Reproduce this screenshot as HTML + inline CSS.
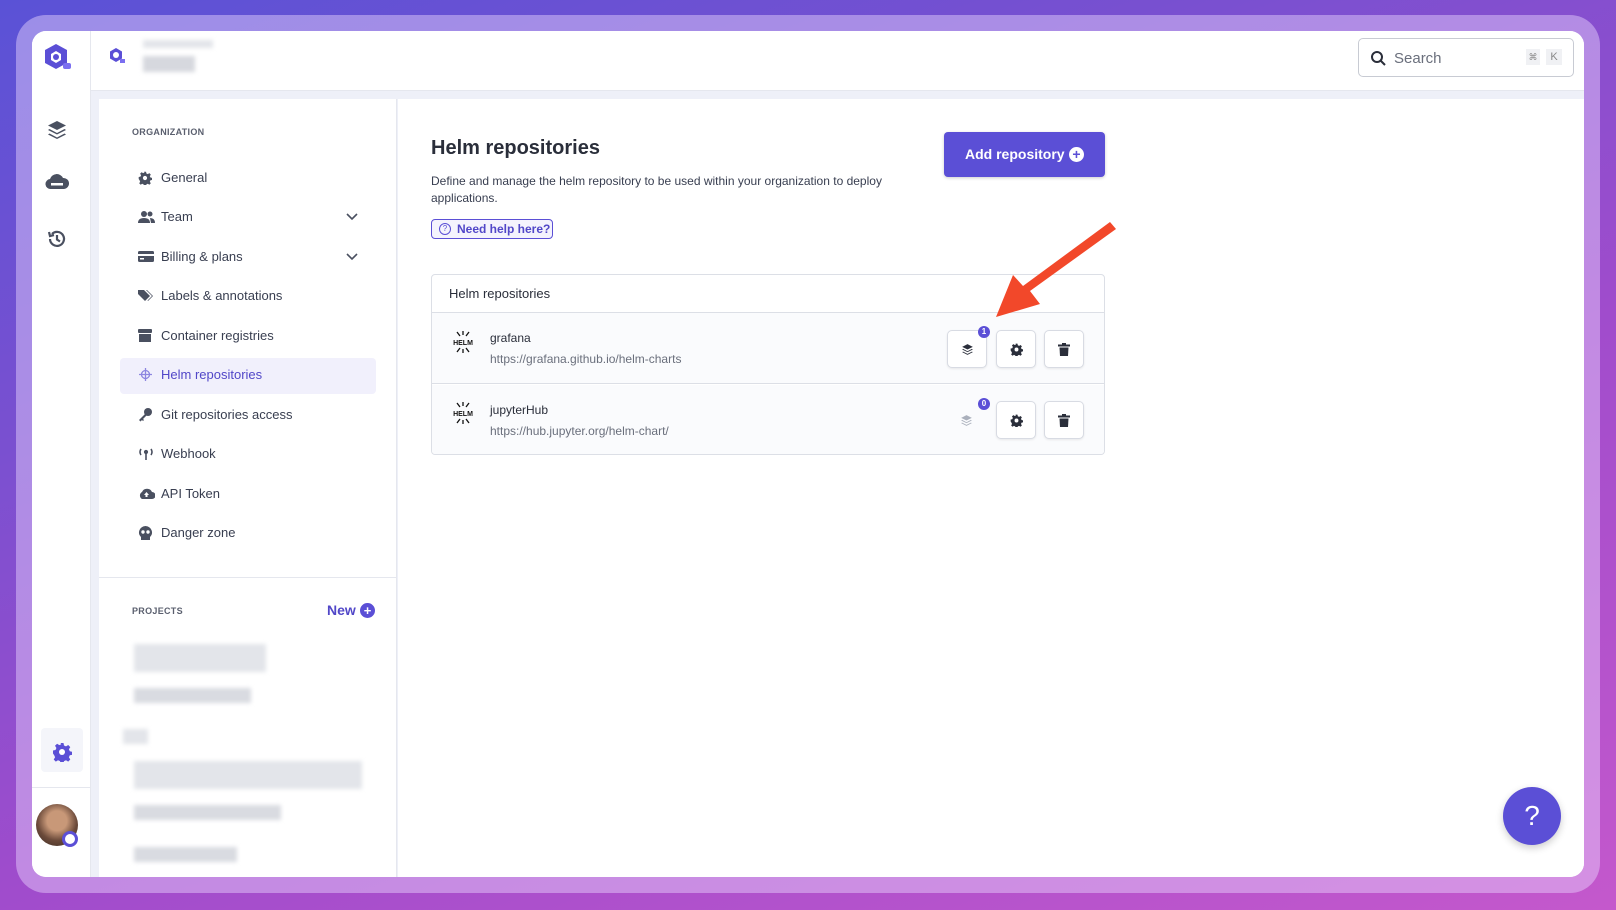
<!DOCTYPE html>
<html><head><meta charset="utf-8"><style>
*{box-sizing:border-box;margin:0;padding:0}
body{width:1616px;height:910px;overflow:hidden;font-family:"Liberation Sans",sans-serif;background:linear-gradient(160deg,#5a52d6 0%,#7a50d0 30%,#a04ccc 60%,#c458cc 100%);position:relative;color:#383e50}
.frame{position:absolute;left:16px;top:15px;width:1584px;height:878px;border-radius:30px;background:rgba(235,215,255,0.45)}
.win{position:absolute;left:32px;top:31px;width:1552px;height:846px;border-radius:14px;background:#fff;overflow:hidden}
.abs{position:absolute}
.rail{left:0;top:0;width:59px;height:846px;border-right:1px solid #e5e7ee;background:#fff}
.hdr{left:59px;top:0;right:0;height:60px;border-bottom:1px solid #e5e7ee;background:#fff}
.gray{left:59px;top:60px;right:0;bottom:0;background:#eef0f8}
.side{left:67px;top:68px;width:298px;bottom:0;background:#fff;border-right:1px solid #e5e7ee}
.main{left:366px;top:68px;right:0;bottom:0;background:#fff}
.item{position:absolute;left:0;font-size:13px;color:#383e50;white-space:nowrap;line-height:15px}
.item svg{position:absolute;left:-23px;top:1px}
.blur{position:absolute;background:#e3e5ea;filter:blur(2px)}
.btn{position:absolute;width:40px;height:38px;border:1px solid #d8dbe3;border-radius:5px;background:#fff;box-shadow:0 1px 2px rgba(0,0,0,.08)}
.btn svg{position:absolute;left:13px;top:12px}
.badge{position:absolute;width:12px;height:12px;border-radius:6px;background:#5b4fd6;color:#fff;font-size:8px;text-align:center;line-height:12px;font-weight:bold}
.helm{position:absolute;left:19px;width:22px;text-align:center;font-size:7px;font-weight:bold;color:#111;letter-spacing:-.3px}
</style></head><body>
<div class="frame"></div>
<div class="win">
 <div class="abs gray"></div>
 <div class="abs rail">
  <svg class="abs" style="left:9px;top:10px" width="34" height="34" viewBox="0 0 34 34"><path d="M15 3 L26 9 L26 22 L15 28 L4 22 L4 9Z" fill="#5b4fd6"/><path d="M15 10 L20 13 L20 19 L15 22 L10 19 L10 13Z" fill="#fff"/><circle cx="15" cy="16" r="3" fill="#5b4fd6"/><rect x="22" y="22" width="8" height="6" rx="2" fill="#7b6ff0"/></svg>
  <svg class="abs" style="left:14px;top:88px" width="22" height="22" viewBox="0 0 22 22" fill="#4a5060"><path d="M11 2 L20 6.5 L11 11 L2 6.5Z"/><path d="M3.5 10 L11 14 L18.5 10 L20 11 L11 15.5 L2 11Z"/><path d="M3.5 14.5 L11 18.5 L18.5 14.5 L20 15.5 L11 20 L2 15.5Z"/></svg>
  <svg class="abs" style="left:13px;top:141px" width="24" height="20" viewBox="0 0 24 20" fill="#4a5060"><path d="M6 17 A5 5 0 0 1 5 7 A7 7 0 0 1 18 6 A5.5 5.5 0 0 1 19 17Z"/><rect x="6" y="11" width="12" height="2.5" fill="#fff"/></svg>
  <svg class="abs" style="left:14px;top:197px" width="22" height="22" viewBox="0 0 22 22" fill="none" stroke="#4a5060" stroke-width="2.2"><path d="M4 11 A7 7 0 1 0 6 6"/><path d="M3 4 L4 8 L8 7"/><path d="M11 7 V11.5 L14 13.5"/></svg>
  <div class="abs" style="left:9px;top:697px;width:42px;height:44px;background:#f4f5fa;border-radius:4px"></div>
  <svg class="abs" style="left:20px;top:711px" width="20" height="20" viewBox="0 0 20 20"><path fill="#5b4fd6" d="M8.5 1h3l.5 2.5 2 .9 2.2-1.4 2.1 2.1-1.4 2.2.9 2 2.5.5v3l-2.5.5-.9 2 1.4 2.2-2.1 2.1-2.2-1.4-2 .9-.5 2.5h-3l-.5-2.5-2-.9-2.2 1.4-2.1-2.1 1.4-2.2-.9-2L1 11.5v-3l2.5-.5.9-2L3 3.8 5.1 1.7 7.3 3.1l2-.9z"/><circle cx="10" cy="10" r="3" fill="#fff"/></svg>
  <div class="abs" style="left:0;top:756px;width:59px;border-top:1px solid #e5e7ee"></div>
  <div class="abs" style="left:4px;top:773px;width:42px;height:42px;border-radius:21px;background:radial-gradient(circle at 50% 40%,#c89878 0 30%,#6b4a3a 60%,#3a2a22)"></div>
  <div class="abs" style="left:30px;top:800px;width:16px;height:16px;border-radius:8px;background:#fff;border:3px solid #5b4fd6"></div>
 </div>
 <div class="abs hdr">
  <svg class="abs" style="left:17px;top:16px" width="18" height="18" viewBox="0 0 18 18"><path d="M8 1 L14 4.5 L14 11.5 L8 15 L2 11.5 L2 4.5Z" fill="#5b4fd6"/><circle cx="8" cy="8" r="3" fill="#fff"/><rect x="12" y="12" width="5" height="4" fill="#7b6ff0"/></svg>
  <div class="blur" style="left:52px;top:9px;width:70px;height:8px"></div>
  <div class="blur" style="left:52px;top:25px;width:52px;height:16px;background:#d6d8de"></div>
  <div class="abs" style="left:1267px;top:7px;width:216px;height:39px;border:1px solid #c8cbd3;border-radius:5px;background:#fff">
   <svg class="abs" style="left:11px;top:11px" width="17" height="17" viewBox="0 0 17 17" fill="none" stroke="#2a2e3a" stroke-width="2"><circle cx="7" cy="7" r="5"/><path d="M11 11 L15 15"/></svg>
   <span class="abs" style="left:35px;top:11px;font-size:15px;color:#6a6f7c">Search</span>
   <span class="abs" style="left:167px;top:10px;width:14px;height:16px;background:#f0f1f4;font-size:9px;color:#888;text-align:center;line-height:16px">⌘</span>
   <span class="abs" style="left:187px;top:10px;width:16px;height:16px;background:#f0f1f4;font-size:11px;color:#888;text-align:center;line-height:16px">K</span>
  </div>
 </div>
 <div class="abs side">
  <div class="abs" style="left:33px;top:28px;font-size:9px;font-weight:bold;color:#5a5f6e;letter-spacing:.3px">ORGANIZATION</div>
  <div class="abs" style="left:21px;top:259px;width:256px;height:36px;background:#f1f0fc;border-radius:4px"></div>
  <div style="position:absolute;left:62px;top:0">
   <div class="item" style="top:71px"><svg width="14" height="14" viewBox="0 0 20 20"><path fill="#4a5060" d="M8.5 1h3l.5 2.5 2 .9 2.2-1.4 2.1 2.1-1.4 2.2.9 2 2.5.5v3l-2.5.5-.9 2 1.4 2.2-2.1 2.1-2.2-1.4-2 .9-.5 2.5h-3l-.5-2.5-2-.9-2.2 1.4-2.1-2.1 1.4-2.2-.9-2L1 11.5v-3l2.5-.5.9-2L3 3.8 5.1 1.7 7.3 3.1l2-.9z"/><circle cx="10" cy="10" r="3" fill="#fff"/></svg>General</div>
   <div class="item" style="top:110px"><svg width="17" height="14" viewBox="0 0 17 14" fill="#4a5060"><circle cx="6" cy="4" r="3"/><circle cx="12" cy="4" r="2.5"/><path d="M0 13 Q0 8 6 8 Q12 8 12 13Z"/><path d="M12 8 Q17 8 17 13 H13Z"/></svg>Team</div>
   <div class="item" style="top:150px"><svg width="16" height="13" viewBox="0 0 16 13" fill="#4a5060"><rect x="0" y="1" width="16" height="11" rx="1.5"/><rect x="0" y="4" width="16" height="2" fill="#fff"/><rect x="2" y="8" width="4" height="1.5" fill="#fff"/></svg>Billing &amp; plans</div>
   <div class="item" style="top:189px"><svg width="15" height="14" viewBox="0 0 15 14" fill="#4a5060"><path d="M0 1 H6 L12 7 L7 12 L0 5Z"/><path d="M8 1 H9 L15 7 L10 12 L9.5 11.5 L14 7Z"/></svg>Labels &amp; annotations</div>
   <div class="item" style="top:229px"><svg width="14" height="13" viewBox="0 0 14 13" fill="#4a5060"><rect x="0" y="0" width="14" height="4" rx="1"/><rect x="1" y="5" width="12" height="8"/></svg>Container registries</div>
   <div class="item" style="top:268px;color:#5147c8"><svg width="15" height="13" viewBox="0 0 15 13" fill="none" stroke="#8d86e0" stroke-width="1.3"><circle cx="7.5" cy="6.5" r="4"/><path d="M1 6.5h13M7.5 0v13"/></svg>Helm repositories</div>
   <div class="item" style="top:308px"><svg width="14" height="14" viewBox="0 0 14 14" fill="#4a5060"><circle cx="10" cy="4" r="4"/><path d="M7 6 L1 12 L2.5 13.5 L4 12 L5 13 L6 12 L5 11 L8.5 7.5Z"/></svg>Git repositories access</div>
   <div class="item" style="top:347px"><svg width="16" height="13" viewBox="0 0 16 13" fill="none" stroke="#4a5060" stroke-width="1.6"><path d="M3 2 Q1 5 3 8M13 2 Q15 5 13 8M8 5 V13"/><circle cx="8" cy="5" r="1.3" fill="#4a5060"/></svg>Webhook</div>
   <div class="item" style="top:387px"><svg width="17" height="13" viewBox="0 0 17 13" fill="#4a5060"><path d="M4 12 A4 4 0 0 1 4 5 A5.5 5.5 0 0 1 14 5 A3.5 3.5 0 0 1 14 12Z"/><path d="M8.5 5 L6 8 H11Z M7.5 8 H9.5 V10 H7.5Z" fill="#fff"/></svg>API Token</div>
   <div class="item" style="top:426px"><svg width="15" height="14" viewBox="0 0 15 14" fill="#4a5060"><path d="M7.5 0 A7 6.5 0 0 1 12 11 V14 H3 V11 A7 6.5 0 0 1 7.5 0Z"/><circle cx="5" cy="6" r="1.7" fill="#fff"/><circle cx="10" cy="6" r="1.7" fill="#fff"/></svg>Danger zone</div>
  </div>
  <svg class="abs" style="left:247px;top:114px" width="12" height="8" viewBox="0 0 12 8" fill="none" stroke="#4a5060" stroke-width="1.6"><path d="M1 1 L6 6 L11 1"/></svg>
  <svg class="abs" style="left:247px;top:154px" width="12" height="8" viewBox="0 0 12 8" fill="none" stroke="#4a5060" stroke-width="1.6"><path d="M1 1 L6 6 L11 1"/></svg>
  <div class="abs" style="left:0;top:478px;width:297px;border-top:1px solid #e5e7ee"></div>
  <div class="abs" style="left:33px;top:507px;font-size:9px;font-weight:bold;color:#5a5f6e;letter-spacing:.3px">PROJECTS</div>
  <div class="abs" style="left:228px;top:503px;font-size:14px;font-weight:bold;color:#5147c8">New</div>
  <div class="abs" style="left:261px;top:504px;width:15px;height:15px;border-radius:8px;background:#5b4fd6;color:#fff;font-size:13px;line-height:15px;text-align:center;font-weight:bold">+</div>
  <div class="blur" style="left:35px;top:545px;width:132px;height:28px"></div>
  <div class="blur" style="left:35px;top:589px;width:117px;height:15px;background:#d9dbe1"></div>
  <div class="blur" style="left:24px;top:630px;width:25px;height:15px"></div>
  <div class="blur" style="left:35px;top:662px;width:228px;height:28px"></div>
  <div class="blur" style="left:35px;top:706px;width:147px;height:15px;background:#d9dbe1"></div>
  <div class="blur" style="left:35px;top:748px;width:103px;height:15px;background:#d9dbe1"></div>
 </div>
 <div class="abs main">
  <div class="abs" style="left:33px;top:38px;font-size:20px;font-weight:bold;color:#2a2e3a">Helm repositories</div>
  <div class="abs" style="left:33px;top:74px;width:480px;font-size:12px;line-height:17px;color:#383e50">Define and manage the helm repository to be used within your organization to deploy applications.</div>
  <div class="abs" style="left:33px;top:120px;width:122px;height:20px;border:1px solid #5b4fd6;border-radius:4px;background:#f4f3fd;font-size:12px;color:#5147c8;font-weight:bold;line-height:18px;padding-left:25px">Need help here?</div>
  <div class="abs" style="left:41px;top:124px;width:12px;height:12px;border:1.3px solid #5b4fd6;border-radius:6px;font-size:8px;text-align:center;line-height:10px;color:#5b4fd6">?</div>
  <div class="abs" style="left:546px;top:33px;width:161px;height:45px;background:#5b4fd6;border-radius:4px;color:#fff;font-size:14px;font-weight:bold;line-height:45px;padding-left:21px;box-shadow:0 1px 3px rgba(0,0,0,.2)">Add repository</div>
  <div class="abs" style="left:671px;top:48px;width:15px;height:15px;border-radius:8px;background:#fff;color:#5b4fd6;font-size:14px;font-weight:bold;line-height:15px;text-align:center">+</div>
  <div class="abs" style="left:33px;top:175px;width:674px;height:181px;border:1px solid #dcdfe6;border-radius:4px;overflow:hidden">
   <div class="abs" style="left:0;top:0;width:100%;height:38px;border-bottom:1px solid #dcdfe6;font-size:13px;color:#2a2e3a;line-height:38px;padding-left:17px">Helm repositories</div>
   <div class="abs" style="left:0;top:38px;width:100%;height:71px;background:#fafbfd;border-bottom:1px solid #dcdfe6"></div>
   <div class="abs" style="left:0;top:110px;width:100%;height:71px;background:#fafbfd"></div>
   <svg class="abs" style="left:20px;top:55px" width="22" height="24" viewBox="0 0 22 24" fill="none" stroke="#111" stroke-width="1.3"><path d="M11 1 V5 M5 2 L8 6 M17 2 L14 6 M11 23 V19 M5 22 L8 18 M17 22 L14 18"/><text x="11" y="15" font-size="7" font-weight="bold" fill="#111" stroke="none" text-anchor="middle" font-family="Liberation Sans">HELM</text></svg>
   <svg class="abs" style="left:20px;top:126px" width="22" height="24" viewBox="0 0 22 24" fill="none" stroke="#111" stroke-width="1.3"><path d="M11 1 V5 M5 2 L8 6 M17 2 L14 6 M11 23 V19 M5 22 L8 18 M17 22 L14 18"/><text x="11" y="15" font-size="7" font-weight="bold" fill="#111" stroke="none" text-anchor="middle" font-family="Liberation Sans">HELM</text></svg>
   <div class="abs" style="left:58px;top:56px;font-size:12px;color:#2a2e3a">grafana</div>
   <div class="abs" style="left:58px;top:77px;font-size:12px;color:#6a6f7c">https://grafana.github.io/helm-charts</div>
   <div class="abs" style="left:58px;top:128px;font-size:12px;color:#2a2e3a">jupyterHub</div>
   <div class="abs" style="left:58px;top:149px;font-size:12px;color:#6a6f7c">https://hub.jupyter.org/helm-chart/</div>
   <div class="btn" style="left:515px;top:55px"><svg width="13" height="13" viewBox="0 0 22 22" fill="#2a2e3a"><path d="M11 2 L20 6.5 L11 11 L2 6.5Z"/><path d="M3.5 10 L11 14 L18.5 10 L20 11 L11 15.5 L2 11Z"/><path d="M3.5 14.5 L11 18.5 L18.5 14.5 L20 15.5 L11 20 L2 15.5Z"/></svg></div>
   <div class="badge" style="left:546px;top:51px">1</div>
   <svg class="abs" style="left:528px;top:139px" width="13" height="13" viewBox="0 0 22 22" fill="#aab0bc"><path d="M11 2 L20 6.5 L11 11 L2 6.5Z"/><path d="M3.5 10 L11 14 L18.5 10 L20 11 L11 15.5 L2 11Z"/><path d="M3.5 14.5 L11 18.5 L18.5 14.5 L20 15.5 L11 20 L2 15.5Z"/></svg>
   <div class="badge" style="left:546px;top:123px">0</div>
   <div class="btn" style="left:564px;top:55px"><svg width="13" height="13" viewBox="0 0 20 20"><path fill="#2a2e3a" d="M8.5 1h3l.5 2.5 2 .9 2.2-1.4 2.1 2.1-1.4 2.2.9 2 2.5.5v3l-2.5.5-.9 2 1.4 2.2-2.1 2.1-2.2-1.4-2 .9-.5 2.5h-3l-.5-2.5-2-.9-2.2 1.4-2.1-2.1 1.4-2.2-.9-2L1 11.5v-3l2.5-.5.9-2L3 3.8 5.1 1.7 7.3 3.1l2-.9z"/><circle cx="10" cy="10" r="3" fill="#fff"/></svg></div>
   <div class="btn" style="left:612px;top:55px"><svg width="12" height="13" viewBox="0 0 12 13" fill="#2a2e3a"><rect x="0" y="1.5" width="12" height="2"/><rect x="4" y="0" width="4" height="2"/><path d="M1.5 4.5 H10.5 L10 13 H2Z"/></svg></div>
   <div class="btn" style="left:564px;top:126px"><svg width="13" height="13" viewBox="0 0 20 20"><path fill="#2a2e3a" d="M8.5 1h3l.5 2.5 2 .9 2.2-1.4 2.1 2.1-1.4 2.2.9 2 2.5.5v3l-2.5.5-.9 2 1.4 2.2-2.1 2.1-2.2-1.4-2 .9-.5 2.5h-3l-.5-2.5-2-.9-2.2 1.4-2.1-2.1 1.4-2.2-.9-2L1 11.5v-3l2.5-.5.9-2L3 3.8 5.1 1.7 7.3 3.1l2-.9z"/><circle cx="10" cy="10" r="3" fill="#fff"/></svg></div>
   <div class="btn" style="left:612px;top:126px"><svg width="12" height="13" viewBox="0 0 12 13" fill="#2a2e3a"><rect x="0" y="1.5" width="12" height="2"/><rect x="4" y="0" width="4" height="2"/><path d="M1.5 4.5 H10.5 L10 13 H2Z"/></svg></div>
  </div>
  <div class="abs" style="left:1105px;top:688px;width:58px;height:58px;border-radius:29px;background:#5b4fd6;color:#fff;font-size:28px;text-align:center;line-height:58px;box-shadow:0 3px 8px rgba(0,0,0,.2)">?</div>
 </div>
</div>
<svg class="abs" style="left:0;top:0" width="1616" height="910"><path d="M1116 229 L1030 291 L1040 304 L996 317 L1013 275 L1023 286 L1110 222Z" fill="#f2482a"/></svg>
</body></html>
